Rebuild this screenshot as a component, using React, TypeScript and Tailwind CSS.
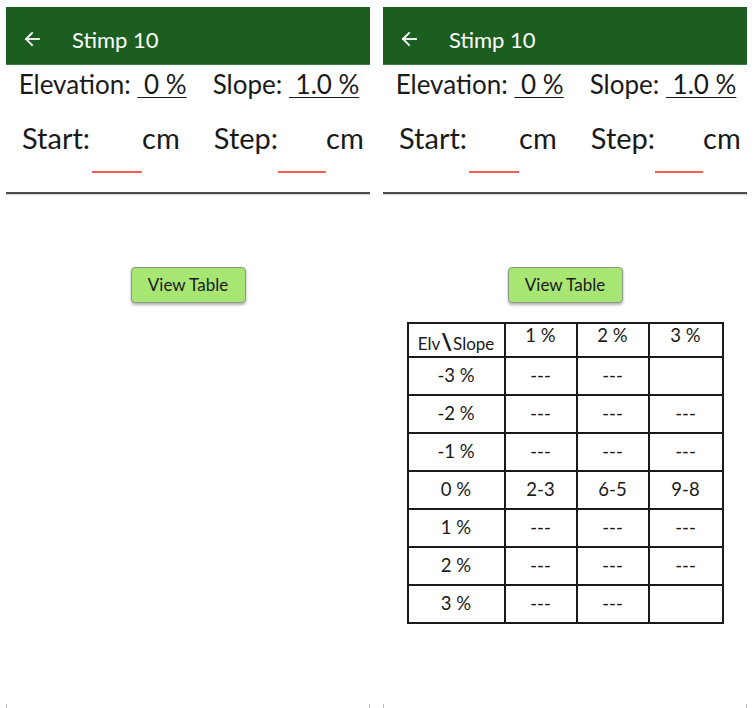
import React from "react";

const font = { fontFamily: "Lato, 'Noto Sans', sans-serif" };

function Arrow() {
  return (
    <svg width="16" height="16" viewBox="0 0 16 16" fill="none" stroke="white" strokeWidth="1.8" strokeLinecap="square">
      <path d="M15 8H2" />
      <path d="M8 2L2 8l6 6" />
    </svg>
  );
}

const rows = [
  ["-3 %", "---", "---", ""],
  ["-2 %", "---", "---", "---"],
  ["-1 %", "---", "---", "---"],
  ["0 %", "2-3", "6-5", "9-8"],
  ["1 %", "---", "---", "---"],
  ["2 %", "---", "---", "---"],
  ["3 %", "---", "---", ""],
];

function Table() {
  const cols = "grid-cols-[97px_72px_72px_72px]";
  return (
    <div className="mt-[19px] self-center border-2 border-[#1a1a1a] bg-white text-[#1a1a1a]">
      <div className={`grid ${cols} h-[32px]`}>
        <div className="flex items-end justify-center pb-[4px] text-[17px] leading-none border-r-2 border-[#1a1a1a]">
          <span>Elv</span>
          <span className="text-[23px] font-black leading-none mx-[1px] -mb-[1px]">\</span>
          <span>Slope</span>
        </div>
        {["1 %", "2 %", "3 %"].map((h, i) => (
          <div key={h} className={`flex justify-center pt-[2px] text-[18.5px] leading-none ${i < 2 ? "border-r-2 border-[#1a1a1a]" : ""}`}>
            {h}
          </div>
        ))}
      </div>
      {rows.map((r, ri) => (
        <div key={ri} className={`grid ${cols} h-[38px] border-t-2 border-[#1a1a1a]`}>
          {r.map((c, ci) => (
            <div
              key={ci}
              className={`flex items-center justify-center text-[18.5px] ${ci < 3 ? "border-r-2 border-[#1a1a1a]" : ""}`}
            >
              {c}
            </div>
          ))}
        </div>
      ))}
    </div>
  );
}

function Panel({ showTable }: { showTable: boolean }) {
  return (
    <div className="relative w-[364px] h-[701px] flex flex-col bg-white" style={font}>
      <div className="h-[58px] bg-[#1b5e20] border-b border-[#3f7a43] flex items-center text-white">
        <div className="ml-[18px] mt-[6px] w-[16px] flex"><Arrow /></div>
        <div className="ml-[32px] text-[22px] leading-none mt-[8px]">Stimp 10</div>
      </div>
      <div className="flex justify-center gap-[26px] text-[26px] leading-none text-[#1a1a1a] mt-[6px] pl-[2px]">
        <span>
          Elevation: <span className="underline decoration-1 underline-offset-[3px]">&nbsp;0 %</span>
        </span>
        <span>
          Slope: <span className="underline decoration-1 underline-offset-[3px]">&nbsp;1.0 %</span>
        </span>
      </div>
      <div className="flex items-start text-[29px] leading-none text-[#1a1a1a] mt-[26px] pl-[16px]">
        <span>Start:</span>
        <div className="ml-[2px] w-[50px] h-[50px] flex flex-col justify-end">
          <div className="h-[2px] bg-[#ff5a5a]" />
        </div>
        <span>cm</span>
        <span className="ml-[34px]">Step:</span>
        <div className="ml-[0px] w-[48px] h-[50px] flex flex-col justify-end">
          <div className="h-[2px] bg-[#ff5a5a]" />
        </div>
        <span>cm</span>
      </div>
      <div className="mt-[19px] h-[2px] bg-[#4d4d4d]" />
      <div className="h-px bg-[#d0d0d0]" />
      <button className="mt-[72px] self-center w-[115px] h-[36px] bg-[#a8e673] border border-[#8a9a80] rounded-[4px] shadow-[0_2px_3px_rgba(0,0,0,0.3)] text-[17px] text-[#1a1a1a]">
        View Table
      </button>
      {showTable && <Table />}
      <div className="absolute left-0 bottom-0 w-px h-[4px] bg-[#bbb]" />
      <div className="absolute right-0 bottom-0 w-px h-[4px] bg-[#bbb]" />
    </div>
  );
}

export default function App() {
  return (
    <div className="w-[756px] h-[708px] bg-white flex gap-[13px] pl-[6px] pt-[7px] overflow-hidden">
      <Panel showTable={false} />
      <Panel showTable={true} />
    </div>
  );
}
